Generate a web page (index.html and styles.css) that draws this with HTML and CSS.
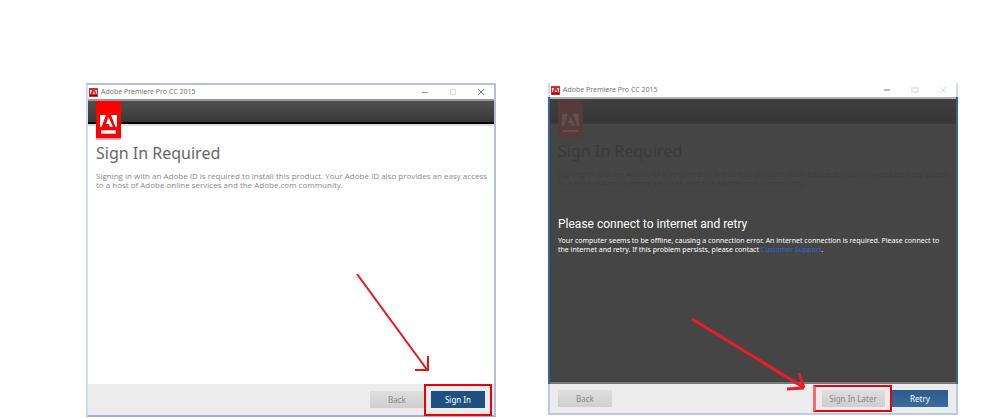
FILE: index.html
```
<!DOCTYPE html>
<html lang="en">
<head>
<meta charset="utf-8">
<title>Adobe Premiere Pro CC 2015</title>
<link rel="stylesheet" href="styles.css">
</head>
<body>
<main class="stage">
  <section class="window">
    <header class="titlebar">
      <svg class="app-icon" viewBox="0 0 9 9"><rect width="9" height="9" fill="#c9302f"/><path d="M1 6V2h2L1.500 6zM8 6V2H6l1.500 4zM4.500 3L6 6H4" fill="#ffd9d9"/><path d="M1 7.500h7" stroke="#8c0000"/></svg>
      <span class="title">Adobe Premiere Pro CC 2015</span>
      <span class="controls">
        <button aria-label="Minimize"><svg viewBox="0 0 8 8"><path d="M1 4.500h6" stroke="#999"/></svg></button>
        <button aria-label="Maximize"><svg viewBox="0 0 8 8"><rect x="1.500" y="1.500" width="5" height="5" fill="none" stroke="#dedede"/></svg></button>
        <button aria-label="Close"><svg viewBox="0 0 8 8"><path d="M1 1l6 6M7 1L1 7" stroke="#777"/></svg></button>
      </span>
    </header>
    <div class="band"><svg class="logo" viewBox="0 0 25 39"><rect width="25" height="37" fill="#f00"/><rect y="37" width="25" height="2" fill="#faa"/><path d="M4 26V14h6L5.500 26zM21 26V14h-6l4.500 12zM12.500 16L17 26h-3l-1-3h-3z" fill="#fff"/><path d="M5 31h15" stroke="#fbb" stroke-width="4"/><path d="M6 31h13" stroke="#fff" stroke-width="2"/></svg></div>
    <div class="content">
      <h1>Sign In Required</h1>
      <p>Signing in with an Adobe ID is required to install this product. Your Adobe ID also provides an easy access<br>to a host of Adobe online services and the Adobe.com community.</p>
    </div>
    <footer class="actions">
      <button class="btn">Back</button>
      <span class="marked"><button class="btn primary">Sign In</button></span>
    </footer>
    <svg class="arrow" viewBox="0 0 80 105"><path d="M5 4L76 101M76 86V101M63 100H77" fill="none" stroke="#f01018" stroke-width="2"/></svg>
  </section>

  <section class="window offline">
    <header class="titlebar">
      <svg class="app-icon" viewBox="0 0 9 9"><rect width="9" height="9" fill="#c9302f"/><path d="M1 6V2h2L1.500 6zM8 6V2H6l1.500 4zM4.500 3L6 6H4" fill="#ffd9d9"/><path d="M1 7.500h7" stroke="#8c0000"/></svg>
      <span class="title">Adobe Premiere Pro CC 2015</span>
      <span class="controls">
        <button aria-label="Minimize"><svg viewBox="0 0 8 8"><path d="M1 4h6" stroke="#bbb" stroke-width="2"/></svg></button>
        <button aria-label="Maximize"><svg viewBox="0 0 8 8"><rect x="1" y="2" width="6" height="4" fill="none" stroke="#e8e8e8" stroke-width="2"/></svg></button>
        <button aria-label="Close"><svg viewBox="0 0 8 8"><path d="M1 1l6 6M7 1L1 7" stroke="#ddd"/></svg></button>
      </span>
    </header>
    <div class="band"><svg class="logo" viewBox="0 0 25 39"><rect width="25" height="39" fill="#573b3b"/><path d="M4 27V15h6L5.500 27zM21 27V15h-6l4.500 12zM12.500 17L17 27h-3l-1-3h-3z" fill="#655050"/><path d="M5 32h15" stroke="#655050" stroke-width="2"/></svg></div>
    <div class="content">
      <h1>Sign In Required</h1>
      <p>Signing in with an Adobe ID is required to install this product. Your Adobe ID also provides an easy access<br>to a host of Adobe online services and the Adobe.com community.</p>
      <div class="message">
        <h2>Please connect to internet and retry</h2>
        <p>Your computer seems to be offline, causing a connection error. An internet connection is required. Please connect to<br>the internet and retry. If this problem persists, please contact <a href="#">Customer Support</a>.</p>
      </div>
    </div>
    <footer class="actions">
      <button class="btn back">Back</button>
      <span class="marked"><button class="btn">Sign In Later</button></span>
      <button class="btn primary">Retry</button>
    </footer>
    <svg class="arrow" viewBox="0 0 120 80"><path d="M5 6L116 74M112 60L117 75M100 76L117 75" fill="none" stroke="#ee1c25" stroke-width="3"/></svg>
  </section>
</main>
</body>
</html>
```
FILE: styles.css
```
* { box-sizing: border-box; }
body { margin: 0; background: #fff; font-family: "Noto Sans", "Open Sans", sans-serif; }
.stage {
  display: grid;
  grid-template-columns: repeat(2, minmax(0, 1fr));
  gap: 52px;
  align-items: start;
  min-height: 100vh;
  padding: 83px 45px 0 86px;
}
.window {
  position: relative;
  display: flex;
  flex-direction: column;
  border: 2px solid #afc0d9;
  border-left-color: #cbdcf0;
  border-bottom-color: #9db0d0;
  background: #fff;
}
.titlebar {
  display: flex;
  align-items: center;
  height: 14px;
  padding: 0 9px 0 1px;
  background: #fff;
}
.app-icon { width: 9px; height: 9px; }
.title { margin-left: 3px; font-size: 7px; line-height: 14px; color: #777; white-space: nowrap; }
.controls { display: flex; gap: 20px; margin-left: auto; }
.controls button { display: flex; width: 8px; height: 8px; padding: 0; border: 0; background: none; }
.controls svg { width: 8px; height: 8px; }
.band {
  height: 25px;
  padding-left: 8px;
  border-top: 2px solid #999;
  border-bottom: 2px solid #000;
  background: linear-gradient(#505050, #383838);
}
.logo { display: block; position: relative; width: 25px; height: 39px; }
.content { height: 260px; padding: 16px 8px 0; border-top: 2px solid #ddd; }
h1 { margin: 0; font-size: 16px; font-weight: 400; line-height: 22px; color: #666; }
.content p { margin: 7px 0 0; font-family: "Open Sans", sans-serif; font-size: 8px; line-height: 9px; color: #888; white-space: nowrap; }
.actions {
  display: flex;
  align-items: center;
  justify-content: flex-end;
  height: 31px;
  padding-right: 2px;
  background: #ececec;
}
.btn {
  width: 54px;
  height: 17px;
  padding: 0;
  border: 0;
  background: linear-gradient(#dedede, #cfcfcf);
  font: 8px/17px "Noto Sans", sans-serif;
  color: #888;
}
.btn.primary { background: #205081; color: #fff; }
.marked { display: flex; align-items: center; justify-content: center; width: 68px; height: 32px; border: 2px solid #ee0008; }
.arrow { position: absolute; right: 62px; bottom: 40px; width: 80px; height: 105px; }

.offline {
  border-top-width: 0;
  border-image: linear-gradient(#cfdaf2 16px, #3a5f96 16px, #3a5f96 calc(100% - 31px), #bccbe5 calc(100% - 31px)) 2;
}
.offline .band { height: 27px; border-top-color: #b3b3b3; border-bottom-color: #3a3a3a; background: linear-gradient(#3f3f3f, #373737); }
.offline .content { padding-top: 16px; border-top: 0; border-bottom: 2px solid #777; background: #454545; }
.offline h1 { color: #3a3a3a; }
.offline .content > p { color: #3d3d3d; }
.message { margin-top: 29px; }
h2 { margin: 0; font-family: Roboto, sans-serif; font-size: 12px; font-weight: 400; line-height: 16px; color: #fff; }
.content .message p { margin-top: 4px; font-family: "Noto Sans", sans-serif; font-size: 7px; color: #fff; }
.message a { color: #2f66cf; text-decoration: none; }
.offline .actions { height: 29px; padding: 0 8px; }
.offline .primary { width: 56px; background: linear-gradient(#2c5a8c, #3a6c9c); }
.offline .back { margin-right: auto; }
.offline .marked { width: 79px; height: 27px; border-left: 3px solid #f06c70; }
.offline .marked .btn { width: 63px; }
.offline .arrow { right: 149px; bottom: 20px; width: 120px; height: 80px; }
```
